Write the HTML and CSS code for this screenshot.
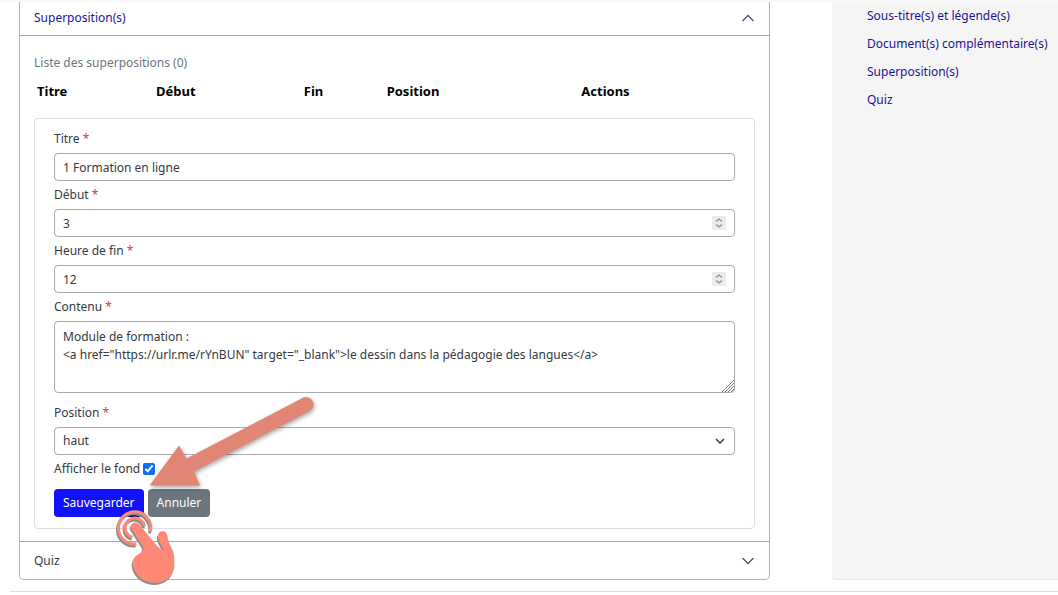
FILE: index.html
```html
<!DOCTYPE html>
<html lang="fr">
<head>
    <meta charset="UTF-8">
    <meta name="viewport" content="width=device-width, initial-scale=1.0">
    <title>Superposition(s)</title>
    <link rel="stylesheet" href="styles.css">
</head>
<body>
    <div class="page">
        <main class="accordion">
            <button type="button" class="accordion-header open" aria-expanded="true">
                <span>Superposition(s)</span>
                <svg class="chevron" viewBox="0 0 12 8"><path d="M0.500 7 6 1.500 11.500 7"/></svg>
            </button>

            <section class="accordion-body">
                <h2>Liste des superpositions (0)</h2>
                <table class="overlays">
                    <thead>
                        <tr>
                            <th class="col-title">Titre</th>
                            <th class="col-start">Début</th>
                            <th class="col-end">Fin</th>
                            <th class="col-position">Position</th>
                            <th>Actions</th>
                        </tr>
                    </thead>
                </table>

                <form class="card">
                    <label for="title">Titre <span class="required">*</span></label>
                    <input class="control" type="text" id="title" value="1 Formation en ligne">

                    <label for="start">Début <span class="required">*</span></label>
                    <div class="control-wrap">
                        <input class="control" type="number" id="start" value="3">
                        <svg class="spinner" viewBox="0 0 14 14"><path d="M4 5.500 7 3 10 5.500M4 8.500 7 11 10 8.500"/></svg>
                    </div>

                    <label for="end">Heure de fin <span class="required">*</span></label>
                    <div class="control-wrap">
                        <input class="control" type="number" id="end" value="12">
                        <svg class="spinner" viewBox="0 0 14 14"><path d="M4 5.500 7 3 10 5.500M4 8.500 7 11 10 8.500"/></svg>
                    </div>

                    <label for="content">Contenu <span class="required">*</span></label>
                    <div class="control-wrap content-wrap">
                        <textarea class="control" id="content" spellcheck="false">Module de formation :
&lt;a href="https://urlr.me/rYnBUN" target="_blank"&gt;le dessin dans la pédagogie des langues&lt;/a&gt;</textarea>
                        <svg class="grip" viewBox="0 0 12 12"><path d="M0 12 12 0M3 12 12 3M6 12 12 6M9 12 12 9"/></svg>
                    </div>

                    <label for="position">Position <span class="required">*</span></label>
                    <div class="control-wrap">
                        <select class="control" id="position">
                            <option>haut</option>
                        </select>
                        <svg class="caret" viewBox="0 0 10 6"><path d="M1 1 5 5 9 1"/></svg>
                    </div>

                    <div class="check-row">
                        <label for="background">Afficher le fond</label>
                        <input type="checkbox" id="background" checked>
                    </div>

                    <div class="actions">
                        <button type="submit" class="btn btn-primary">Sauvegarder</button>
                        <button type="button" class="btn btn-secondary">Annuler</button>
                    </div>
                </form>
            </section>

            <button type="button" class="accordion-header last" aria-expanded="false">
                <span>Quiz</span>
                <svg class="chevron" viewBox="0 0 12 8"><path d="M0.500 1 6 6.500 11.500 1"/></svg>
            </button>
        </main>

        <nav class="sidebar">
            <a href="#subtitles">Sous-titre(s) et légende(s)</a>
            <a href="#documents">Document(s) complémentaire(s)</a>
            <a href="#overlays">Superposition(s)</a>
            <a href="#quiz">Quiz</a>
        </nav>

        <!-- arrow and hand pointing at the save button -->
        <svg class="pointer" viewBox="110 390 220 205" aria-hidden="true">
            <path class="arrow" d="M149.500 485.500 179 445.500 186.500 458.500 303 397.800A7.300 7.300 0 0 1 309.500 411L194 471.500 200 485.500Z"/>
            <path class="dark" d="M121.500 517Q125 511.500 134.500 511Q144 511.500 147 517Z"/>
            <g class="hand" transform="translate(0.500 0)">
                <path class="ring" d="M136 544A16.200 16.200 0 1 1 150 531.500"/>
                <path class="ring" d="M132 537.300A9.800 9.800 0 1 1 144 526"/>
                <path class="fill" d="M131.300 529.200C129 525.500 131.500 522 135.500 522.500C137.500 522.700 139 524.300 140.300 526L154.500 543.500Q159 549 163.500 550.500Q160.500 545.500 158 540C156 534 159.500 530.500 163.200 531.300C166 532 167 535 167.300 538C168 545 173.500 549 173.800 558V566C173.500 576 165.500 582.500 155.500 583C145 583 136 577 133 568C131 562 133 557 137.500 554.500C141 552.500 143.500 550 142 546Z"/>
            </g>
        </svg>
    </div>
    <hr>
</body>
</html>
```

FILE: styles.css
```css
* {
    margin: 0;
    padding: 0;
    box-sizing: border-box;
}

body {
    font-family: "Noto Sans", sans-serif;
    font-size: 12px;
    line-height: 18px;
    color: #343a40;
    background: #fff;
    border-top: 2px solid #f8f8f8;
    overflow: hidden;
}

svg {
    fill: none;
}

input,
textarea,
select,
button {
    font: inherit;
    color: inherit;
}

.page {
    position: relative;
    display: grid;
    grid-template-columns: minmax(0, 1fr) 226px;
    column-gap: 62px;
    padding-left: 19px;
}

.accordion {
    border: 1px solid #adb1b5;
    border-top: 0;
    border-radius: 0 0 5px 5px;
}

.accordion-header {
    display: flex;
    justify-content: space-between;
    align-items: center;
    width: 100%;
    height: 34px;
    padding: 0 15px 0 14px;
    background: none;
    border: 0;
    border-bottom: 1px solid #a1a6a9;
    text-align: left;
    cursor: pointer;
}

.accordion-header.open {
    padding-bottom: 1px;
    color: #1b1498;
}

.accordion-header.last {
    height: 38px;
    border-top: 1px solid #a1a6a9;
    border-bottom: 0;
}

.chevron {
    width: 12px;
    height: 8px;
    stroke: #4c5358;
    stroke-width: 1.3;
}

.open .chevron {
    stroke: #40547c;
}

.accordion-body {
    padding: 18px 14px 12px;
}

.accordion-body h2 {
    font-size: 12px;
    font-weight: 400;
    color: #6c757d;
}

.overlays {
    width: 100%;
    margin-top: 6px;
    table-layout: fixed;
    border-collapse: collapse;
    color: #000;
}

.overlays th {
    height: 26px;
    padding: 0 3px;
    text-align: left;
    font-size: 13px;
    font-weight: 700;
}

.col-title {
    width: 16.5%;
}

.col-start {
    width: 20.5%;
}

.col-end {
    width: 11.5%;
}

.col-position {
    width: 27%;
}

.card {
    margin-top: 14px;
    padding: 6px 19px 11px;
    border: 1px solid #dcdedf;
    border-radius: 4px;
}

.card > label {
    display: block;
    padding: 5px 0;
}

.required {
    color: #dc3545;
}

.control-wrap {
    position: relative;
}

.control {
    display: block;
    width: 100%;
    height: 28px;
    padding: 0 8px;
    background: #fff;
    border: 1px solid #a9adb0;
    border-radius: 4px;
    appearance: none;
    outline: none;
}

input[type="number"] {
    appearance: textfield;
}

input[type="number"]::-webkit-inner-spin-button {
    appearance: none;
}

textarea.control {
    height: 72px;
    padding-top: 6px;
    resize: none;
    overflow: hidden;
}

.content-wrap {
    margin-bottom: 6px;
}

.spinner {
    position: absolute;
    top: 7px;
    right: 9px;
    width: 14px;
    height: 14px;
    background: #ececee;
    stroke: #8d8d8f;
    stroke-width: 1.3;
    pointer-events: none;
}

.grip {
    position: absolute;
    right: 1px;
    bottom: 1px;
    width: 12px;
    height: 12px;
    stroke: #777;
    pointer-events: none;
}

.caret {
    position: absolute;
    top: 11px;
    right: 10px;
    width: 10px;
    height: 6px;
    stroke: #343a40;
    stroke-width: 1.5;
    pointer-events: none;
}

.check-row {
    display: flex;
    align-items: center;
    gap: 3px;
    padding: 5px 0;
}

.check-row input {
    width: 12px;
    height: 12px;
    accent-color: #0d6efd;
}

.actions {
    display: flex;
    gap: 4px;
    padding-top: 6px;
}

.btn {
    height: 28px;
    padding: 0 9px;
    border: 0;
    border-radius: 4px;
    color: #fff;
    cursor: pointer;
}

.btn-primary {
    background: #1111fb;
}

.btn-secondary {
    background: #6c757d;
}

.sidebar {
    display: flex;
    flex-direction: column;
    gap: 10px;
    padding: 5px 0 0 35px;
    background: #f5f5f5;
    border-bottom: 1px solid #e6e6e6;
    border-radius: 0 0 0 4px;
    white-space: nowrap;
}

.sidebar a {
    color: #1b1498;
    text-decoration: none;
}

.pointer {
    position: absolute;
    left: 110px;
    top: 388px;
    width: 220px;
    height: 205px;
    pointer-events: none;
}

.arrow {
    fill: #e18675;
    filter: drop-shadow(1px 2px 2px rgba(0, 0, 0, 0.35));
}

.dark {
    fill: #070767;
}

.hand {
    filter: drop-shadow(-1px 2px 0 #8c8c8c);
}

.ring {
    stroke: #ff8877;
    stroke-width: 3;
}

.fill {
    fill: #ff8877;
}

hr {
    margin: 11px 0 0 10px;
    border: 0;
    border-top: 1px solid #dedede;
}
```
